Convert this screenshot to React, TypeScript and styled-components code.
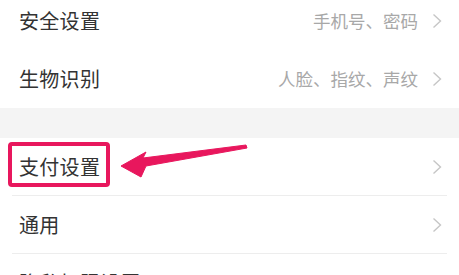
import React from "react";
import styled, { createGlobalStyle } from "styled-components";

const GlobalStyle = createGlobalStyle`
  html, body {
    margin: 0;
    padding: 0;
    background: #ffffff;
  }
  body {
    font-family: "Noto Sans CJK SC", "Noto Sans", sans-serif;
  }
`;

const Page = styled.div`
  width: 459px;
  height: 275px;
  overflow: hidden;
  background: #ffffff;
`;

const List = styled.div`
  margin-top: -8px;
`;

const Section = styled.section`
  background: #ffffff;
`;

const Gap = styled.div`
  height: 30px;
  background: #f4f4f4;
`;

const Row = styled.div<{ $divider?: boolean }>`
  position: relative;
  height: 58px;
  margin: 0 12px;
  padding: 0 5px 0 7px;
  display: flex;
  align-items: center;
  justify-content: space-between;
  box-sizing: border-box;
  border-bottom: 1px solid ${(p) => (p.$divider ? "#ededed" : "transparent")};
`;

const Title = styled.span`
  font-size: 20px;
  color: #333333;
  letter-spacing: 0.3px;
`;

const Trail = styled.div`
  display: flex;
  align-items: center;
  gap: 14px;
`;

const Hint = styled.span`
  font-size: 17.5px;
  color: #a8a8a8;
`;

const Highlight = styled.div`
  position: absolute;
  left: -4px;
  top: 4px;
  width: 102px;
  height: 45px;
  box-sizing: border-box;
  border: 4px solid #e8175d;
  border-radius: 4px;
`;

const Arrow = styled.svg`
  position: absolute;
  left: 103px;
  top: 2px;
`;

const Chevron = () => (
  <svg width="10" height="16" viewBox="0 0 10 16">
    <polyline points="1.5,1.5 8.5,8 1.5,14.5" fill="none" stroke="#c6c6c6" strokeWidth="1.4" />
  </svg>
);

type Item = { title: string; hint?: string; divider?: boolean };

const first: Item[] = [
  { title: "安全设置", hint: "手机号、密码" },
  { title: "生物识别", hint: "人脸、指纹、声纹" },
];

const second: Item[] = [
  { title: "通用", divider: true },
  { title: "隐私权限设置" },
];

const ItemRow = ({ title, hint, divider }: Item) => (
  <Row $divider={divider}>
    <Title>{title}</Title>
    <Trail>
      {hint && <Hint>{hint}</Hint>}
      <Chevron />
    </Trail>
  </Row>
);

export default function App() {
  return (
    <Page>
      <GlobalStyle />
      <List>
        <Section>
          {first.map((it) => (
            <ItemRow key={it.title} {...it} />
          ))}
        </Section>
        <Gap />
        <Section>
          <Row $divider>
            <Title>支付设置</Title>
            <Trail>
              <Chevron />
            </Trail>
            <Highlight />
            <Arrow width="135" height="40" viewBox="0 0 135 40">
              <polygon
                points="6,26 31,12 28,18 131,5 132,8 31,26 26,37"
                fill="#e8175d"
                stroke="#e8175d"
                strokeWidth="1"
                strokeLinejoin="round"
              />
            </Arrow>
          </Row>
          {second.map((it) => (
            <ItemRow key={it.title} {...it} />
          ))}
        </Section>
      </List>
    </Page>
  );
}
